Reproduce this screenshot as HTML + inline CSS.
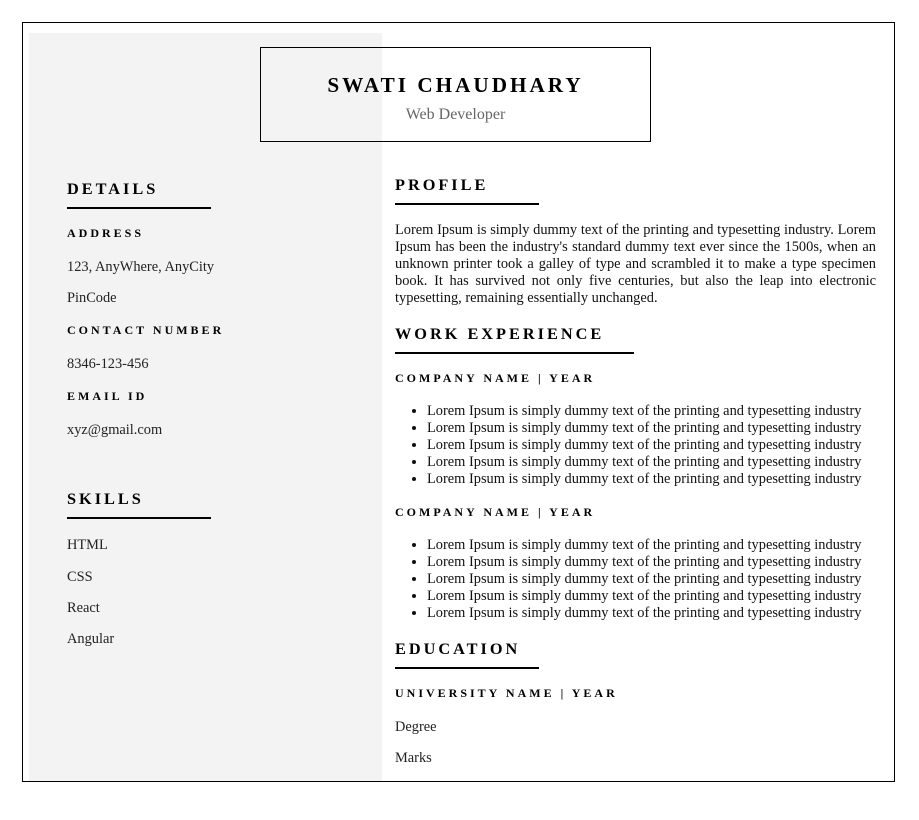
<!DOCTYPE html>
<html><head><meta charset="utf-8"><style>
*{margin:0;padding:0;box-sizing:border-box}
body{width:919px;height:820px;background:#fff;font-family:"Liberation Serif",serif;color:#111;position:relative;overflow:hidden}
.a{position:absolute;white-space:nowrap}
.h{font-size:16.3px;font-weight:bold;letter-spacing:3px;color:#000}
.s{font-size:12px;font-weight:bold;letter-spacing:3px;color:#000}
.t{font-size:14.4px;color:#222}
.ln{position:absolute;height:2px;background:#000}
ul{position:absolute;left:427px;font-size:14.4px;line-height:17px;color:#111}
li{white-space:nowrap}
</style></head><body>
<div style="position:absolute;left:22px;top:22px;width:873px;height:760px;border:1px solid #000"></div>
<div style="position:absolute;left:29px;top:33px;width:353px;height:748px;background:#f3f3f3"></div>
<div style="position:absolute;left:260px;top:47px;width:391px;height:95px;border:1px solid #000"></div>
<div class="a" style="left:260px;width:391px;text-align:center;top:73px;font-size:21.2px;font-weight:bold;letter-spacing:3px;color:#000">SWATI CHAUDHARY</div>
<div class="a" style="left:260px;width:391px;text-align:center;top:106px;font-size:16px;color:#666">Web Developer</div>

<div class="a h" style="left:67px;top:179px">DETAILS</div>
<div class="ln" style="left:67px;top:207px;width:144px"></div>
<div class="a s" style="left:67px;top:226px">ADDRESS</div>
<div class="a t" style="left:67px;top:259px">123, AnyWhere, AnyCity</div>
<div class="a t" style="left:67px;top:290px">PinCode</div>
<div class="a s" style="left:67px;top:323px">CONTACT NUMBER</div>
<div class="a t" style="left:67px;top:356px">8346-123-456</div>
<div class="a s" style="left:67px;top:389px">EMAIL ID</div>
<div class="a t" style="left:67px;top:422px">xyz@gmail.com</div>
<div class="a h" style="left:67px;top:489px">SKILLS</div>
<div class="ln" style="left:67px;top:517px;width:144px"></div>
<div class="a t" style="left:67px;top:537px">HTML</div>
<div class="a t" style="left:67px;top:569px">CSS</div>
<div class="a t" style="left:67px;top:600px">React</div>
<div class="a t" style="left:67px;top:631px">Angular</div>

<div class="a h" style="left:395px;top:175px">PROFILE</div>
<div class="ln" style="left:395px;top:203px;width:144px"></div>
<div style="position:absolute;left:395px;top:222px;width:481px;font-size:14.4px;line-height:17px;text-align:justify;color:#111">Lorem Ipsum is simply dummy text of the printing and typesetting industry. Lorem Ipsum has been the industry's standard dummy text ever since the 1500s, when an unknown printer took a galley of type and scrambled it to make a type specimen book. It has survived not only five centuries, but also the leap into electronic typesetting, remaining essentially unchanged.</div>
<div class="a h" style="left:395px;top:324px">WORK EXPERIENCE</div>
<div class="ln" style="left:395px;top:352px;width:239px"></div>
<div class="a s" style="left:395px;top:371px">COMPANY NAME | YEAR</div>
<ul style="top:403px">
<li>Lorem Ipsum is simply dummy text of the printing and typesetting industry</li>
<li>Lorem Ipsum is simply dummy text of the printing and typesetting industry</li>
<li>Lorem Ipsum is simply dummy text of the printing and typesetting industry</li>
<li>Lorem Ipsum is simply dummy text of the printing and typesetting industry</li>
<li>Lorem Ipsum is simply dummy text of the printing and typesetting industry</li>
</ul>
<div class="a s" style="left:395px;top:505px">COMPANY NAME | YEAR</div>
<ul style="top:537px">
<li>Lorem Ipsum is simply dummy text of the printing and typesetting industry</li>
<li>Lorem Ipsum is simply dummy text of the printing and typesetting industry</li>
<li>Lorem Ipsum is simply dummy text of the printing and typesetting industry</li>
<li>Lorem Ipsum is simply dummy text of the printing and typesetting industry</li>
<li>Lorem Ipsum is simply dummy text of the printing and typesetting industry</li>
</ul>
<div class="a h" style="left:395px;top:639px">EDUCATION</div>
<div class="ln" style="left:395px;top:667px;width:144px"></div>
<div class="a s" style="left:395px;top:686px">UNIVERSITY NAME | YEAR</div>
<div class="a t" style="left:395px;top:719px">Degree</div>
<div class="a t" style="left:395px;top:750px">Marks</div>
</body></html>
